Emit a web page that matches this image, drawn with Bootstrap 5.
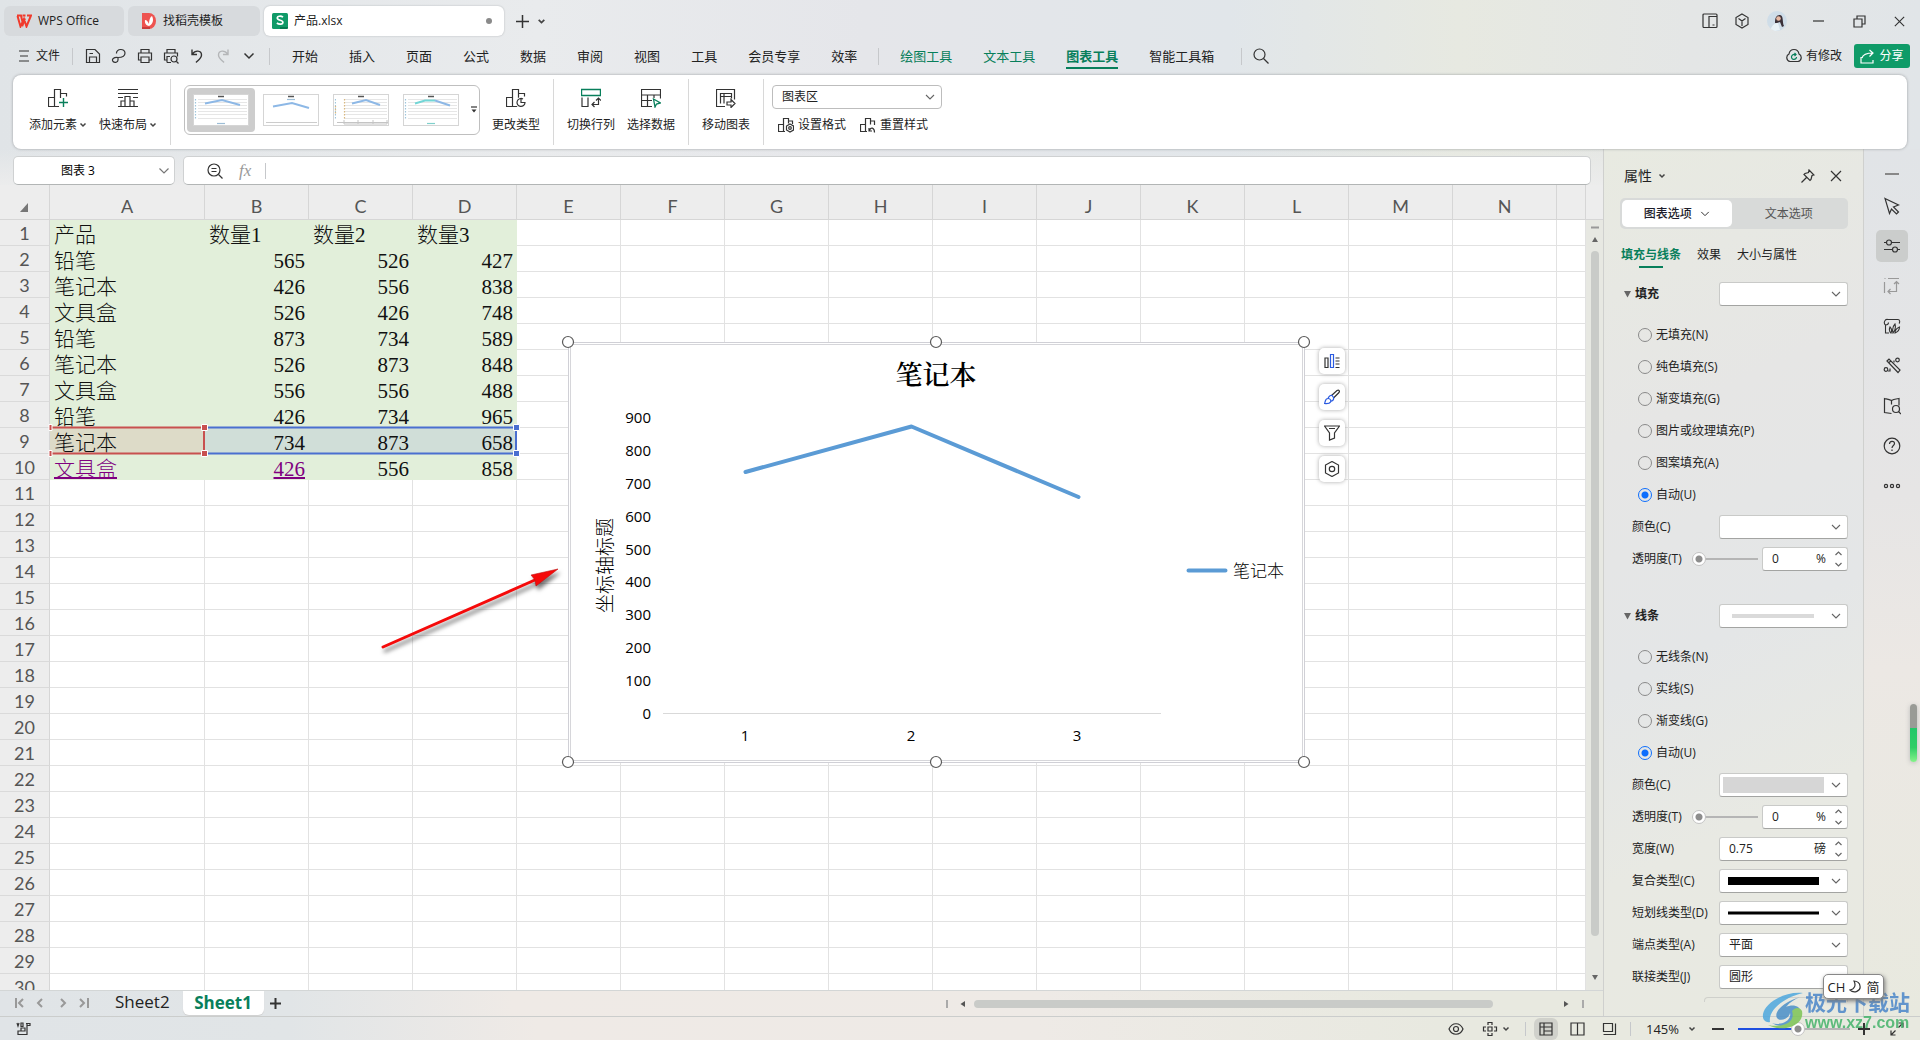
<!DOCTYPE html>
<html lang="zh-CN">
<head>
<meta charset="utf-8">
<meta name="viewport" content="width=device-width, initial-scale=1">
<title>产品.xlsx - WPS Office</title>
<link href="https://cdn.jsdelivr.net/npm/bootstrap@5.3.0/dist/css/bootstrap.min.css" rel="stylesheet">
<style>
:root{--ui:"Open Sans","Noto Sans CJK SC",sans-serif;--green:#087f5b;--line:#d2d3d3}
body{font-family:var(--ui);font-size:12px;line-height:18px;color:#222;overflow:hidden;
 background:linear-gradient(90deg,#e0e4e7 0,#e9ebed 28%,#e5e6ea 45%,#e1e6ea 64%,#e7e9e1 76%,#e4e6e6 88%,#e1e5e8 100%)}
svg{display:block;fill:none;stroke:#333;stroke-width:1.2;flex:none}
svg.plain{stroke:none}
button{background:none;border:0;padding:0;color:inherit;font-size:inherit;line-height:inherit}
a{color:inherit;text-decoration:none}
.g{stroke:var(--green)}
.titlebar{height:40px;padding:6px 14px 4px 4px}
.wintab{height:30px;border-radius:6px;background:#d7dadd;padding:0 12px;gap:6px}
.wintab.current{background:#fff;box-shadow:0 0 2px #aeb2b5}
.menurow{height:32px;font-size:13px;line-height:18px;padding:0 10px 0 19px}
.menurow nav{gap:31px}
.sepv{width:1px;background:#c6c8cb;flex:none}
.menurow .sepv{height:17px}
.menurow nav a.tool{color:var(--green)}
.menurow nav a.current{font-weight:700;position:relative}
.menurow nav a.current::after{content:"";position:absolute;left:0;right:0;bottom:-4px;height:2px;background:var(--green)}
.share{background:#0f9b68;color:#fff;border-radius:3px;height:24px;width:56px;gap:4px}
.ribbon{height:74px;margin:3px 13px 0;background:#fff;border-radius:8px;box-shadow:0 0 3px #9a9da0;position:relative;z-index:2}
.ribbon .sepv{height:66px;background:#d8d8d8;margin-top:4px}
.rgroup{gap:12px;padding:0 13px}
.rbtn{padding-top:13px;gap:8px}
.gallery{width:296px;height:50px;margin-top:10px;border:1px solid #bfbfbf;border-radius:6px;padding:2px 1px 2px 2px}
.thumb{width:68px;height:44px;border-radius:4px}
.thumb.current{background:#cdcdcd}
.thumb svg{background:#fff}
.picker{font-size:12px;line-height:18px;height:24px;padding:0 24px 0 9px;border:1px solid #c9cac8;border-bottom-color:#a3a4a2;border-radius:3px;background-color:#fff;color:#222;
 background-image:url("data:image/svg+xml,%3Csvg xmlns='http://www.w3.org/2000/svg' viewBox='0 0 10 10'%3E%3Cpath d='M1 3l4 4 4-4' fill='none' stroke='%23666' stroke-width='1.1'/%3E%3C/svg%3E");background-size:10px 10px;background-position:right 6px center}
.ribbon .picker{width:170px;border-color:#bdbdbd;border-radius:4px;margin-top:10px}
.sheetcol{min-width:0;background:linear-gradient(#e6e8ea00 0,#ededed 40px)}
.fbar{padding:7px 12px 0 13px;gap:8px}
.fbox{height:29px;background:#fff;border:1px solid #cfd1d2;border-bottom-color:#b2b5b5;border-radius:5px}
.fbox input{border:0;outline:0;background:none;min-width:0}
.gridarea{position:relative;min-height:0;overflow:hidden}
.gridview{overflow:hidden;min-width:0}
.cells{table-layout:fixed;border-collapse:separate;border-spacing:0;width:100%}
.cells th,.cells td{height:26px;padding:0;border-right:1px solid #e2e2e2;border-bottom:1px solid #e2e2e2;white-space:nowrap;overflow:hidden}
.cells td{background:#fff;font:300 21px/20px "Liberation Serif","Noto Sans CJK SC",serif;color:#111;padding:5px 3px 0 4px}
.cells th{background:#ededed;font:400 18px/24px Lato,sans-serif;color:#555;text-align:center;border-color:#d6d6d6}
.cells thead th{height:35px;padding-top:7px}
.cells tbody th{border-bottom-color:#dadada}
.cells td.used{background:#e2efda;border-color:#e2efda}
.cells td.num{text-align:right}
.cells td.series{background:#dddbc8;border-color:#dddbc8}
.cells td.value{background:#d0ded8;border-color:#d0ded8}
.cells td.linked a{color:#800080;text-decoration:underline;text-decoration-thickness:2px;text-underline-offset:1px}
.overlay{position:absolute;left:0;top:0;pointer-events:none}
.overlay text{stroke:none;fill:#000}
.axis{font:15px "Open Sans",sans-serif}
.ctools{position:absolute;left:1319px;top:163px;gap:10px}
.ctools button{width:26px;height:26px;border-radius:5px;background:#fff;box-shadow:0 0 4px #aaa}
.vscroll{width:17px;background:#e7e8e2}
.vhead{height:35px;background:#ededed;border-bottom:1px solid #d6d6d6}
.knobbar{background:#c9cbc8;border-radius:5px}
.sheetbar{height:26px;border-top:1px solid #d3d6d6;padding-left:14px;background:linear-gradient(90deg,#e0e4e7 0,#e1e5e7 18%,#efeae6 32%,#eeeae6 65%,#e8e9e0 88%)}
.sheetbar .nm{font-size:17px;line-height:22px}
.sheetbar .nm.current{background:#fff;color:var(--green);font-weight:700;width:81px;height:24px;border-radius:0 0 6px 6px;box-shadow:0 1px 1px #d0d0d0}
.statusbar{height:24px;border-top:1px solid #cbcdcc;padding:0 16px;background:linear-gradient(90deg,#e0e4e7 0,#e1e5e7 15%,#efeae6 28%,#eeeae6 54%,#e8e9e0 75%,#e8e9e0 100%)}
.panel{width:261px;border-left:1px solid #cfd0ce;border-right:1px solid #cfd0ce;padding:0 15px 0 16px;
 background:linear-gradient(155deg,#e8eae1 0,#e6e6e5 30%,#e4e6e7 55%,#e8e9e3 75%,#e8e9e0 100%)}
.phead{height:49px;font-size:14px;padding:4px 5px 0 4px}
.seg{height:31px;border-radius:5px;background:#d8dad9;padding:2px}
.seg button{border-radius:5px;color:#555}
.seg .current{background:#fff;color:#1d1d2b;font-weight:500}
.ptabs{height:52px;gap:16px;padding-left:1px}
.ptabs .current{color:var(--green);font-weight:700;position:relative}
.ptabs .current::after{content:"";position:absolute;left:18px;right:18px;bottom:-4px;height:2px;background:var(--green)}
.sec{height:26px;font-weight:700}
.sec svg{margin:0 4px}
.prow{height:32px;padding-left:12px}
.panel .picker{width:129px}
.prow .form-check-input{width:14px;height:14px;margin:0 4px 0 6px;border:1px solid #8a8a8a;background:none;box-shadow:none}
.prow .form-check-input:checked{border:1px solid #0d6efd;background:radial-gradient(circle,#0d6efd 0 3px,transparent 4px)}
.spin{height:24px;background:#fff;border:1px solid #c9cac8;border-bottom-color:#a3a4a2;border-radius:3px;padding:0 4px 0 9px}
.spin input{border:0;outline:0;padding:0;min-width:0;background:none;color:#222}
.rng{appearance:none;-webkit-appearance:none;height:14px;background:linear-gradient(#b5b5b5,#b5b5b5) center/100% 2px no-repeat}
.rng.opacityrng{width:66px;margin:0 4px 0 auto}
.rng::-webkit-slider-thumb{-webkit-appearance:none;width:14px;height:14px;border-radius:50%;border:1px solid #c4c4c4;background:radial-gradient(circle,#8d8d8d 0 3px,#fff 4px)}
.zoomrng{width:112px;background:linear-gradient(90deg,#1f4fe0 0 54%,#b5b5b5 54%) center/100% 2px no-repeat}
.swatch{position:relative}
.swatch i{position:absolute;left:9px;right:29px;top:50%;transform:translateY(-50%);pointer-events:none}
.swatch .fillbar{left:4px;right:24px;height:16px;background:#d6d6d6}
.swatch .soft{left:13px;right:34px;height:4px;background:#dadada}
.swatch .thick{height:8px;background:#000}
.swatch .thin{height:3px;background:#000}
.cut{width:144px;height:5px;border:1px solid #cfd0cb;border-bottom:0;border-radius:4px 4px 0 0}
.rail{width:56px;padding-top:17px;gap:8px;background:linear-gradient(#e1e4e7,#e6e5e5 40%,#ece8e4 60%,#e8e9df)}
.rail button{width:32px;height:32px;border-radius:5px}
.rail .current{background:#cbcdcc}
.viewbtn{width:24px;height:22px;margin:0 12px 0 8px;background:#d0d1cb}
.meter{position:absolute;right:3px;top:704px;width:7px;height:58px;border-radius:4px;background:linear-gradient(#999b96 0 42%,#22c768 42%,#2fce66 75%,#86f28a);box-shadow:0 1px 5px #bbb}
.ime{position:absolute;right:36px;top:974px;width:61px;height:25px;border-radius:5px;background:#fff;border:1px solid #888;box-shadow:1px 2px 4px #777;font-size:13px;gap:4px;z-index:4}
.brandmark{position:absolute;right:10px;bottom:8px;gap:1px;z-index:3;pointer-events:none;opacity:.85}
.brandmark b{font-size:21px;line-height:24px;color:#4a86c9;font-weight:700}
.brandmark span{font:700 16px/18px "Liberation Sans",sans-serif;color:#45b36b}
</style>
</head>
<body class="vh-100 d-flex flex-column position-relative">
<svg width="0" height="0" class="position-absolute">
 <symbol id="caret" viewBox="0 0 8 8"><path d="M1.500 2.500l2.500 2.500 2.500-2.500" stroke="#444" stroke-width="1.500"/></symbol>
 <symbol id="chev" viewBox="0 0 12 12"><path d="M1.500 3.500L6 8l4.500-4.500"/></symbol>
 <symbol id="close" viewBox="0 0 14 14"><path d="M2 2l10 10M12 2L2 12"/></symbol>
</svg>

<header class="titlebar d-flex align-items-start flex-shrink-0">
 <button class="wintab d-flex align-items-center" style="width:120px"><svg width="16" height="14" viewBox="0 0 16 14"><path d="M1 1.500h4L7 10l2-5.500M6.500 1.500h3M1.500 2l3 10.500L8 5l2.500 7.500L15 1.500h-4" stroke="#f03a2c" stroke-width="2"/></svg>WPS Office</button>
 <button class="wintab d-flex align-items-center ms-1" style="width:132px;padding-left:13px"><svg class="plain" width="16" height="16" viewBox="0 0 16 16"><path d="M1 0h7a7 8 0 0 1 0 16H1z" fill="#ee5350"/><path d="M1 14h8v2H1z" fill="#c93c3c"/><path d="M8 13C3 12 4 7 4 7c2 0 3 2 4 4 0-4 1-7 3-8 2 4 1 8-3 10z" fill="#fff"/></svg>找稻壳模板</button>
 <button class="wintab current d-flex align-items-center ms-1" style="width:240px;padding-left:8px"><svg class="plain" width="16" height="16" viewBox="0 0 16 16"><rect width="16" height="16" rx="1.500" fill="#109a68"/><path d="M8 14h8v1l-1 1H8z" fill="#067a50"/><path d="M11 4.200C9 2.600 5.300 2.900 5.300 5.100c0 2.800 5.600 1.500 5.600 4.200 0 2.300-4 2.500-6 .7" stroke="#fff" stroke-width="1.700"/></svg>产品.xlsx<span class="ms-auto rounded-circle" style="width:6px;height:6px;background:#8a8a8a"></span></button>
 <button class="align-self-center ms-2 ps-1" aria-label="新建"><svg width="13" height="13" viewBox="0 0 13 13"><path d="M6.500 0v13M0 6.500h13" stroke-width="1.500"/></svg></button>
 <button class="align-self-center ms-2" aria-label="标签列表"><svg width="9" height="9"><use href="#caret"/></svg></button>
 <div class="ms-auto align-self-center d-flex align-items-center">
  <button style="margin-right:16px" aria-label="布局"><svg width="16" height="16" viewBox="0 0 16 16"><path d="M2 1h12a1 1 0 0 1 1 1v11.500a1 1 0 0 1-1 1H2a1 1 0 0 1-1-1V2a1 1 0 0 1 1-1zM7 14.500V3.500h8M10.500 12h2"/></svg></button>
  <button style="margin-right:17px" aria-label="应用"><svg width="16" height="16" viewBox="0 0 16 16"><path d="M8 1l6 3.500v7L8 15l-6-3.500v-7zM4.500 5.500L8 8l3.500-2.500M8 8v5"/></svg></button>
  <button aria-label="账号" style="margin-right:26px"><svg class="plain" width="20" height="20" viewBox="0 0 20 20"><circle cx="10" cy="10" r="10" fill="#cfdde8"/><path d="M8 12c0-5 1-8 5-8 4 1 2 7 4 11l-2 1-2-5-3 1z" fill="#3a3038"/><circle cx="11.500" cy="7.500" r="2.300" fill="#e6b8a2"/><path d="M4 18c1-4 4-6 7-6l2 7-5 1z" fill="#e9f2f7"/></svg></button>
  <button aria-label="最小化" style="margin-right:29px"><svg width="11" height="12" viewBox="0 0 11 12"><path d="M0 6h11"/></svg></button>
  <button aria-label="还原" style="margin-right:27px"><svg width="13" height="13" viewBox="0 0 13 13"><path d="M1 4h8v8H1zM4 4V1h8v8H9"/></svg></button>
  <button aria-label="关闭"><svg width="13" height="13"><use href="#close" width="13" height="13"/></svg></button>
 </div>
</header>

<div class="menurow d-flex align-items-center flex-shrink-0">
 <button class="d-flex align-items-center" style="font-size:12px;gap:7px;margin-right:12px"><svg width="10" height="12" viewBox="0 0 10 12"><path d="M0 1h10M1 6h8M0 11h10"/></svg>文件</button>
 <span class="sepv"></span>
 <div class="d-flex" style="gap:10px;margin:0 12px">
  <button aria-label="保存"><svg width="16" height="16" viewBox="0 0 16 16"><path d="M1.500 1.500h8.500l4.500 4.500v8.500h-13zM4.500 14.500V9h7v5.500M4.500 5.500H8"/></svg></button>
  <button aria-label="输出"><svg width="16" height="16" viewBox="0 0 16 16"><path d="M5.500 5.500c-.5-5 8.500-5.500 8.500-.5 0 4-3.500 4.500-7 4.500-4.500-.5-6.500 2-5 4 2 2 5 .5 5-1.500V10"/></svg></button>
  <button aria-label="打印"><svg width="16" height="16" viewBox="0 0 16 16"><path d="M4 5V1.500h8V5M4 12H1.500V5h13v7H12M4 9h8v5.500H4z"/></svg></button>
  <button aria-label="打印预览"><svg width="16" height="16" viewBox="0 0 16 16"><path d="M4 5V1.500h8V5M4 12H1.500V5h13v3.500M4 14.500V8.500h3M4 14.500h4M13.500 13.500l2 2"/><circle cx="11" cy="11" r="3"/></svg></button>
  <button aria-label="撤销"><svg width="16" height="16" viewBox="0 0 16 16"><path d="M3 1.500v5h5M3.500 6C6 2 12.500 2 12.500 7c0 3-3 5-5.500 7.500" stroke-width="1.400"/></svg></button>
  <button aria-label="恢复"><svg width="16" height="16" viewBox="0 0 16 16" style="stroke:#b4b6b8"><path d="M13 1.500v5H8M12.500 6C10 2 3.500 2 3.500 7c0 3 3 5 5.500 7.500" stroke-width="1.400"/></svg></button>
  <button aria-label="更多"><svg width="16" height="12" viewBox="-2 0 16 12"><use href="#chev" width="12" height="12" stroke-width="1.500"/></svg></button>
 </div>
 <span class="sepv"></span>
 <nav class="d-flex align-items-center" style="margin-left:22px">
  <a href="#">开始</a><a href="#">插入</a><a href="#">页面</a><a href="#">公式</a><a href="#">数据</a><a href="#">审阅</a><a href="#">视图</a><a href="#">工具</a><a href="#">会员专享</a><a href="#">效率</a>
 </nav>
 <span class="sepv" style="margin:0 21px 0 21px"></span>
 <nav class="d-flex align-items-center"><a href="#" class="tool">绘图工具</a><a href="#" class="tool">文本工具</a><a href="#" class="tool current">图表工具</a><a href="#">智能工具箱</a></nav>
 <span class="sepv" style="margin:0 11px 0 27px"></span>
 <button aria-label="搜索"><svg width="16" height="16" viewBox="0 0 16 16"><circle cx="6.500" cy="6.500" r="5.500"/><path d="M10.500 10.500l5 5"/></svg></button>
 <div class="ms-auto d-flex align-items-center" style="font-size:12px;gap:12px">
  <button class="d-flex align-items-center gap-1"><svg width="16" height="16" viewBox="0 0 16 16"><path d="M4 13.500a4 4 0 0 1-1-7.500C4 0 12 0 13 6a4 4 0 0 1-1 7.500z"/><path class="g" d="M10.500 9A2.500 2.500 0 1 1 8.500 6.500h1.500M8.500 5l1.500 1.500L8.500 8"/></svg>有修改</button>
  <button class="share d-flex align-items-center justify-content-center"><svg width="15" height="15" viewBox="0 0 15 15" style="stroke:#fff"><path d="M1 8v6h12v-3M2 9c1-4 5-5 11-5M9.500 1L13 4 9.500 7.500"/></svg>分享</button>
 </div>
</div>

<section class="ribbon d-flex flex-shrink-0">
 <div class="rgroup d-flex ps-3">
  <button class="rbtn d-flex flex-column align-items-center"><svg width="20" height="20" viewBox="0 0 20 20"><path d="M.5 18.500v-9h6v9zM6.500 9.500v-8h6v17h-6M12.500 5.500h6v3"/><path d="M11 10h8v9h-8z" fill="#fff" stroke="none"/><path class="g" d="M15.500 10v9M11 14.500h9" stroke-width="1.400"/></svg><span class="d-flex align-items-center">添加元素<svg style="margin-left:2px" width="8" height="8"><use href="#caret"/></svg></span></button>
  <button class="rbtn d-flex flex-column align-items-center"><svg width="20" height="20" viewBox="0 0 20 20"><path d="M0 1.500h20M0 5.500h20M0 9.500h5M15 9.500h5M0 18.500h20M3 18v-5h4v5M7 13V8.500h5V18M12 13h4v5"/></svg><span class="d-flex align-items-center">快速布局<svg style="margin-left:2px" width="8" height="8"><use href="#caret"/></svg></span></button>
 </div>
 <span class="sepv"></span>
 <div class="rgroup d-flex">
  <div class="gallery d-flex align-items-center">
   <button class="thumb current d-flex align-items-center justify-content-center" aria-label="样式 1"><svg width="56" height="32" viewBox="0 0 56 32"><g id="mini"><rect x=".5" y=".5" width="55" height="31" stroke="#d5d5d5" stroke-width="1"/><path d="M5 5.500h49M5 8.500h49M5 11.500h49M5 14.500h49M5 17.500h49M5 20.500h49M5 24.500h49" stroke="#e6e6e6" stroke-width="1.200"/><path d="M2.500 5v20" stroke="#9fc6dc" stroke-dasharray="1.500 1.500"/><path d="M25 2.500h6" stroke="#555" stroke-width="1.500"/></g><path d="M12 9.500L29 6l18 5" stroke="#8db8e6" stroke-width="2"/><path d="M24 29.500h8" stroke="#9dbdd6"/></svg></button>
   <button class="thumb d-flex align-items-center justify-content-center" style="margin-left:2px" aria-label="样式 2"><svg width="56" height="32" viewBox="0 0 56 32"><rect x=".5" y=".5" width="55" height="31" stroke="#d5d5d5" stroke-width="1"/><path d="M25 2.500h6" stroke="#555" stroke-width="1.500"/><path d="M24 5.500h8" stroke="#9dbdd6"/><path d="M10 12.500L29 9l17 5" stroke="#8db8e6" stroke-width="2"/><path d="M3 28.500h51" stroke="#ccc"/></svg></button>
   <button class="thumb d-flex align-items-center justify-content-center" style="margin-left:2px" aria-label="样式 3"><svg width="56" height="32" viewBox="0 0 56 32"><use href="#mini"/><rect x="3" y="4" width="8" height="24" fill="#fff" stroke="none"/><path d="M2.500 12v8M11.500 5v20" stroke="#d9b880" stroke-dasharray="1.500 1.500"/><path d="M19 9.500L33 6l14 5" stroke="#8db8e6" stroke-width="2"/><path d="M4 28.500h51M11 26v4h43v-4M25 26v4M40 26v4" stroke="#c4c4c4" stroke-width="1"/></svg></button>
   <button class="thumb d-flex align-items-center justify-content-center" style="margin-left:2px" aria-label="样式 4"><svg width="56" height="32" viewBox="0 0 56 32"><use href="#mini"/><path d="M12 9.500L22 6.500h10" stroke="#74d6d6" stroke-width="2"/><path d="M32 6.500l15 5" stroke="#8db8e6" stroke-width="2"/><path d="M24 29.500h8" stroke="#80d0cc"/></svg></button>
   <button class="ms-auto" aria-label="更多样式"><svg width="8" height="8" viewBox="0 0 8 8"><path d="M1 1h6"/><path d="M1.500 3.500h5L4 6.500z" fill="#333" stroke="none"/></svg></button>
  </div>
  <button class="rbtn d-flex flex-column align-items-center"><svg width="20" height="20" viewBox="0 0 20 20"><path d="M.5 18.500v-9h6v9zM6.500 9.500v-8h6v17h-6M12.500 5.500h6v3"/><circle cx="15" cy="14.500" r="5.500" fill="#fff" stroke="none"/><path d="M17 11a4 4 0 1 0 2 3.500h-4v-4"/></svg>更改类型</button>
 </div>
 <span class="sepv"></span>
 <div class="rgroup d-flex">
  <button class="rbtn d-flex flex-column align-items-center"><svg width="20" height="20" viewBox="0 0 20 20"><path class="g" d="M.5 1.500h19v6H.5z" stroke-width="1.400"/><path d="M1 9.500v9h6v-9M11 16.500h6.500v-6M13.500 14L11 16.500l2.500 2.500M15 12.500l2.500-2.500 2.500 2.500"/></svg>切换行列</button>
  <button class="rbtn d-flex flex-column align-items-center"><svg width="20" height="20" viewBox="0 0 20 20"><path d="M11 18.500H.5v-17h19v9M.5 7h19M.5 12.500H11M6.500 7v11.500M13 7v3"/><path class="g" d="M12.500 11l7 4-4 1-1.500 3z" stroke-width="1.300"/></svg>选择数据</button>
 </div>
 <span class="sepv"></span>
 <div class="rgroup d-flex">
  <button class="rbtn d-flex flex-column align-items-center"><svg width="20" height="20" viewBox="0 0 20 20"><path d="M9 18.500H.5v-17h18v10M4.500 15.500v-10h11v5M4.500 8.500h11M8 5.500v10M11 14h4v-2.500l4 4-4 4V17h-4z"/></svg>移动图表</button>
 </div>
 <span class="sepv"></span>
 <div class="d-flex flex-column" style="padding-left:8px;gap:7px">
  <select class="form-select picker" aria-label="图表元素"><option>图表区</option></select>
  <div class="d-flex" style="gap:14px;padding-left:6px">
   <button class="d-flex align-items-center gap-1"><svg width="16" height="16" viewBox="0 0 16 16"><path d="M.5 14.500v-7h5v7zM5.500 7.500v-6h5v5M5.500 14.500H7M10.500 4h4v3"/><path d="M12 7l3.500 2v4L12 15l-3.500-2V9z"/><circle cx="12" cy="11" r="1.300"/></svg>设置格式</button>
   <button class="d-flex align-items-center gap-1"><svg width="16" height="16" viewBox="0 0 16 16"><path d="M.5 14.500v-7h5v7zM5.500 7.500v-6h5v6M5.500 14.500H7M10.500 4h4v4M9 11v3h3M9.500 13.500c1-4 5-3 5 2"/></svg>重置样式</button>
  </div>
 </div>
</section>

<main class="d-flex" style="flex:1 1 0;min-height:0">
 <div class="sheetcol flex-grow-1 d-flex flex-column">
  <div class="fbar d-flex flex-shrink-0">
   <div class="fbox d-flex align-items-center pe-1" style="width:162px"><input class="w-100 text-center ps-0 pe-3" value="图表 3" aria-label="名称框"><svg width="12" height="12" style="stroke:#777"><use href="#chev"/></svg></div>
   <label class="fbox d-flex align-items-center flex-grow-1" style="padding-left:23px"><svg width="16" height="16" viewBox="0 0 16 16"><circle cx="7" cy="7" r="6"/><path d="M11.500 11.500l4 4M4.500 5.500h5M4.500 8.500h5"/></svg><i class="ms-3" style="font:italic 17px/20px 'Liberation Serif',serif;color:#999">fx</i><span class="sepv" style="height:16px;margin-left:14px"></span><input class="flex-grow-1" aria-label="编辑栏"></label>
  </div>
  <div class="gridarea d-flex flex-grow-1">
   <div class="gridview flex-grow-1">
    <table class="cells"><colgroup id="cols"></colgroup><thead id="colheads"></thead><tbody id="rows"></tbody></table>
   </div>
   <div class="vscroll d-flex flex-column align-items-center flex-shrink-0">
    <div class="vhead w-100"></div>
    <svg class="mt-1" width="10" height="24" viewBox="0 0 10 24"><path d="M1 3.500h8" stroke="#999" stroke-width="2"/><path d="M2 18l3-5 3 5z" fill="#666" stroke="none"/></svg>
    <div class="knobbar flex-grow-1" style="width:8px;margin:3px 0 38px"></div>
    <svg class="mb-2" width="8" height="8" viewBox="0 0 8 8"><path d="M1 1h6L4 6z" fill="#666" stroke="none"/></svg>
   </div>
   <svg class="overlay" width="1340" height="600" viewBox="0 185 1340 600">
    <path d="M50 427.500h154M50 453.500h154M204 427v27" stroke="#c8504f" stroke-width="2"/>
    <path d="M205 427.500h311v26h-311" stroke="#4a6fd0" stroke-width="2"/>
    <path d="M49 424.500h3v6h-3zM49 450.500h3v6h-3zM201.500 424.500h6v6h-6zM201.500 450.500h6v6h-6z" fill="#c8504f" stroke="#fff" stroke-width="1"/>
    <path d="M513.500 424.500h6v6h-6zM513.500 450.500h6v6h-6z" fill="#4a6fd0" stroke="#fff" stroke-width="1"/>
    <rect x="568.5" y="342.5" width="736" height="420" fill="#fff" stroke="#d0d0d6" stroke-width="1"/>
    <rect x="570.5" y="344.500" width="732" height="416" stroke="#d6d6da" stroke-width="1"/>
    <path d="M663 713.500h498" stroke="#d9d9d9" stroke-width="1"/>
    <path d="M745.500 472L911.500 426.500l167 70.500M1188.500 570.500h37" stroke="#5b9bd5" stroke-width="4" stroke-linecap="round" stroke-linejoin="round"/>
    <text x="936" y="385" text-anchor="middle" font-size="27" font-weight="600" font-family="Noto Serif CJK SC,Noto Sans CJK SC">笔记本</text>
    <text x="1233" y="577" font-size="17" font-weight="300" font-family="Noto Sans CJK SC">笔记本</text>
    <text transform="translate(612 613) rotate(-90)" font-size="19" font-weight="300" font-family="Noto Sans CJK SC">坐标轴标题</text>
    <g class="axis" id="axis"></g>
    <g fill="#fff" stroke="#5a5a5a" stroke-width="1.200"><circle cx="568" cy="342" r="5.500"/><circle cx="936" cy="342" r="5.500"/><circle cx="1304" cy="342" r="5.500"/><circle cx="568" cy="762" r="5.500"/><circle cx="936" cy="762" r="5.500"/><circle cx="1304" cy="762" r="5.500"/></g>
    <g style="filter:drop-shadow(2px 4px 2px #0008)"><path d="M383 647l153-67.500" stroke="#f50a0a" stroke-width="3" stroke-linecap="round"/><path d="M558 569l-22 17-1-6-4-5z" fill="#f50a0a" stroke="#c01010" stroke-width=".6"/></g>
   </svg>
   <div class="ctools d-flex flex-column">
    <button class="d-flex align-items-center justify-content-center" aria-label="图表元素"><svg width="16" height="16" viewBox="0 0 16 16"><path d="M1 5h3v9.500H1zM11.500 5h4M11.500 8h4M11.500 11h4M11.500 14.500h4"/><path d="M6.500 1.500h3v13h-3z" stroke="#2b5be0"/></svg></button>
    <button class="d-flex align-items-center justify-content-center" aria-label="图表样式"><svg width="16" height="16" viewBox="0 0 16 16"><path d="M7.500 6.500L13 1.500c2-1 3 .5 2 2L9.500 9"/><path d="M.5 14.500c1-1 0-5 3.500-5 3 0 3 2.500 2.500 3.500-1 2-4 1.500-6 1.500zM4 9.500c1-3 3-3.500 4-3l1.500 2c.5 2-1 3.500-3 4" stroke="#2b5be0"/></svg></button>
    <button class="d-flex align-items-center justify-content-center" aria-label="图表筛选器"><svg width="16" height="16" viewBox="0 0 16 16"><path d="M.5 1h15l-5 7v5l-5 2V8zM5 3.500h6"/></svg></button>
    <button class="d-flex align-items-center justify-content-center" aria-label="设置图表区域格式"><svg width="16" height="16" viewBox="0 0 16 16"><path d="M8 .5L14.500 4v8L8 15.500 1.500 12V4z"/><circle cx="8" cy="8" r="2.700"/></svg></button>
   </div>
  </div>
  <div class="sheetbar d-flex align-items-start flex-shrink-0">
   <svg class="mt-1" width="76" height="16" viewBox="0 0 76 16" style="stroke:#999;stroke-width:2"><path d="M2 3v10M9 4L5 8l4 4M28 4l-4 4 4 4M47 4l4 4-4 4M66 4l4 4-4 4M74 3v10"/></svg>
   <button class="nm" style="margin:0 13px 0 25px">Sheet2</button><button class="nm current">Sheet1</button>
   <button style="margin:7px 0 0 6px" aria-label="新建工作表"><svg width="11" height="11" viewBox="0 0 11 11"><path d="M5.500 0v11M0 5.500h11" stroke-width="2"/></svg></button>
   <div class="d-flex align-items-center h-100" style="margin-left:auto;width:659px;padding-right:18px">
    <svg width="30" height="10" viewBox="0 0 30 10"><path d="M3 1v8" stroke="#aaa" stroke-width="2"/><path d="M21 2v6l-4.500-3z" fill="#555" stroke="none"/></svg>
    <div class="knobbar" style="width:519px;height:8px"></div>
    <svg class="ms-auto" width="24" height="10" viewBox="0 0 24 10"><path d="M3 2v6l4.500-3z" fill="#555" stroke="none"/><path d="M22 1v8" stroke="#aaa" stroke-width="2"/></svg>
   </div>
  </div>
 </div>

 <aside class="panel flex-shrink-0 overflow-hidden">
  <div class="phead d-flex align-items-center"><span>属性</span><svg style="margin-left:6px" width="8" height="8"><use href="#caret"/></svg>
   <button class="ms-auto" style="margin-right:14px" aria-label="固定"><svg width="14" height="14" viewBox="0 0 14 14"><path d="M8 1l5 5-2 .5-1 4-1 1L3 5.500l1-1 3.500-1zM5.500 8.500l-5 5"/></svg></button><button aria-label="关闭面板"><svg width="14" height="14"><use href="#close"/></svg></button></div>
  <div class="seg d-flex"><button class="current d-flex align-items-center justify-content-center gap-2" style="flex:110 0 0">图表选项<svg width="10" height="10"><use href="#chev"/></svg></button><button style="flex:115 0 0">文本选项</button></div>
  <div class="ptabs d-flex align-items-center"><a href="#" class="current">填充与线条</a><a href="#">效果</a><a href="#">大小与属性</a></div>

  <div class="sec d-flex align-items-center justify-content-between"><label for="fillsel"><svg class="d-inline-block" width="7" height="7" viewBox="0 0 7 7"><path d="M0 0h7L3.500 6.500z" fill="#666" stroke="none"/></svg>填充</label><select id="fillsel" class="form-select picker"><option></option></select></div>
  <div style="margin-top:12px">
   <div class="prow d-flex align-items-center"><input class="form-check-input" type="radio" name="fill" id="f1"><label for="f1">无填充(N)</label></div>
   <div class="prow d-flex align-items-center"><input class="form-check-input" type="radio" name="fill" id="f2"><label for="f2">纯色填充(S)</label></div>
   <div class="prow d-flex align-items-center"><input class="form-check-input" type="radio" name="fill" id="f3"><label for="f3">渐变填充(G)</label></div>
   <div class="prow d-flex align-items-center"><input class="form-check-input" type="radio" name="fill" id="f4"><label for="f4">图片或纹理填充(P)</label></div>
   <div class="prow d-flex align-items-center"><input class="form-check-input" type="radio" name="fill" id="f5"><label for="f5">图案填充(A)</label></div>
   <div class="prow d-flex align-items-center"><input class="form-check-input" type="radio" name="fill" id="f6" checked><label for="f6">自动(U)</label></div>
   <div class="prow d-flex align-items-center justify-content-between"><label for="fc">颜色(C)</label><select id="fc" class="form-select picker"><option></option></select></div>
   <div class="prow d-flex align-items-center justify-content-between"><label for="ft">透明度(T)</label><input type="range" class="rng opacityrng" value="0" aria-label="填充透明度"><span class="spin d-flex align-items-center" style="width:86px"><input class="flex-grow-1" id="ft" value="0"><span style="margin-right:8px">%</span><svg width="9" height="18" viewBox="0 0 9 18" style="stroke:#666"><path d="M1.500 5l3-3 3 3M1.500 13l3 3 3-3"/></svg></span></div>
  </div>

  <div class="sec d-flex align-items-center justify-content-between" style="margin-top:28px"><label for="linesel"><svg class="d-inline-block" width="7" height="7" viewBox="0 0 7 7"><path d="M0 0h7L3.500 6.500z" fill="#666" stroke="none"/></svg>线条</label><span class="swatch"><select id="linesel" class="form-select picker"><option></option></select><i class="soft"></i></span></div>
  <div style="margin-top:12px">
   <div class="prow d-flex align-items-center"><input class="form-check-input" type="radio" name="ln" id="l1"><label for="l1">无线条(N)</label></div>
   <div class="prow d-flex align-items-center"><input class="form-check-input" type="radio" name="ln" id="l2"><label for="l2">实线(S)</label></div>
   <div class="prow d-flex align-items-center"><input class="form-check-input" type="radio" name="ln" id="l3"><label for="l3">渐变线(G)</label></div>
   <div class="prow d-flex align-items-center"><input class="form-check-input" type="radio" name="ln" id="l4" checked><label for="l4">自动(U)</label></div>
   <div class="prow d-flex align-items-center justify-content-between"><label for="lc">颜色(C)</label><span class="swatch"><select id="lc" class="form-select picker"><option></option></select><i class="fillbar"></i></span></div>
   <div class="prow d-flex align-items-center justify-content-between"><label for="lt">透明度(T)</label><input type="range" class="rng opacityrng" value="0" aria-label="线条透明度"><span class="spin d-flex align-items-center" style="width:86px"><input class="flex-grow-1" id="lt" value="0"><span style="margin-right:8px">%</span><svg width="9" height="18" viewBox="0 0 9 18" style="stroke:#666"><path d="M1.500 5l3-3 3 3M1.500 13l3 3 3-3"/></svg></span></div>
   <div class="prow d-flex align-items-center justify-content-between"><label for="lw">宽度(W)</label><span class="spin d-flex align-items-center" style="width:129px"><input class="flex-grow-1" id="lw" value="0.75"><span style="margin-right:8px">磅</span><svg width="9" height="18" viewBox="0 0 9 18" style="stroke:#666"><path d="M1.500 5l3-3 3 3M1.500 13l3 3 3-3"/></svg></span></div>
   <div class="prow d-flex align-items-center justify-content-between"><label for="lk">复合类型(C)</label><span class="swatch"><select id="lk" class="form-select picker"><option></option></select><i class="thick"></i></span></div>
   <div class="prow d-flex align-items-center justify-content-between"><label for="ld">短划线类型(D)</label><span class="swatch"><select id="ld" class="form-select picker"><option></option></select><i class="thin"></i></span></div>
   <div class="prow d-flex align-items-center justify-content-between"><label for="le">端点类型(A)</label><select id="le" class="form-select picker"><option>平面</option></select></div>
   <div class="prow d-flex align-items-center justify-content-between"><label for="lj">联接类型(J)</label><select id="lj" class="form-select picker"><option>圆形</option></select></div>
   <div class="cut ms-auto mt-1"></div>
  </div>
 </aside>

 <div class="rail d-flex flex-column align-items-center flex-shrink-0">
  <svg width="14" height="16" viewBox="0 0 14 16"><path d="M0 8h14" stroke="#888" stroke-width="2"/></svg>
  <button class="d-flex align-items-center justify-content-center" aria-label="选择"><svg width="18" height="18" viewBox="0 0 18 18"><path d="M2 1.500l13.500 6.500-5 2 5 5-2 2-5-5-2 4.500z"/></svg></button>
  <button class="current d-flex align-items-center justify-content-center" aria-label="属性"><svg width="18" height="18" viewBox="0 0 18 18"><path d="M1 5.500h2.500M8.500 5.500H17M1 12.500h8.500M14.500 12.500H17"/><circle cx="6" cy="5.500" r="2.500"/><circle cx="12" cy="12.500" r="2.500"/></svg></button>
  <button class="d-flex align-items-center justify-content-center" aria-label="转换"><svg width="18" height="18" viewBox="0 0 18 18" style="stroke:#999"><path d="M1.500 1.500h1M5 1.500h11M1.500 5v11M5 14.500h8.500V5M7.500 12L5 14.500 7.500 17M11 7l2.500-2.500L16 7"/></svg></button>
  <button class="d-flex align-items-center justify-content-center" aria-label="推荐"><svg width="18" height="18" viewBox="0 0 18 18"><path d="M6 16H2.500V8C0 6 2 1.500 5 2.500h10c2 0 2 3 1 4M2.500 8c2 0 3-1 3-2.500M8 16c-2-2-2-4-1-6 2 2 2 4 1 6zM10 16c-1-4 0-7 2-9 1 4 0 7-2 9zM12 16c0-3 2-5 4.500-6 0 3-2 5-4.500 6z" stroke-width="1.100"/></svg></button>
  <button class="d-flex align-items-center justify-content-center" aria-label="美化"><svg width="18" height="18" viewBox="0 0 18 18"><path d="M4 4l2-2 11 11-2 2.500zM5.500 6L8 3.800"/><circle cx="14.500" cy="3" r="1.800"/><circle cx="3" cy="12.500" r="1.800"/><path d="M11 3.500v2M7 11.500v2.500H5"/></svg></button>
  <button class="d-flex align-items-center justify-content-center" aria-label="查阅"><svg width="18" height="18" viewBox="0 0 18 18"><path d="M8.500 3.500C6 2 4 2 1.500 1.500v14l7 1M8.500 3.500c2-1.500 4-1.500 7.500-2v7M8.500 3.500v4M15.500 14.500l2.500 2.500"/><circle cx="13" cy="12" r="3.500"/></svg></button>
  <button class="d-flex align-items-center justify-content-center" aria-label="帮助"><svg width="18" height="18" viewBox="0 0 18 18"><circle cx="9" cy="9" r="7.800"/><path d="M6.500 7c0-3.500 5-3.500 5-.5 0 2-2.500 2-2.500 4.500M9 12.500v1.500"/></svg></button>
  <button class="d-flex align-items-center justify-content-center" aria-label="更多"><svg width="18" height="6" viewBox="0 0 18 6"><circle cx="3" cy="3" r="1.600"/><circle cx="9" cy="3" r="1.600"/><circle cx="15" cy="3" r="1.600"/></svg></button>
 </div>
</main>

<footer class="statusbar d-flex align-items-center flex-shrink-0">
 <svg width="16" height="14" viewBox="0 0 16 14"><path d="M1 1l1 3 1-3M5 1v3.500h2V1zM10 1.500h4v2h-3M11 1v11.500H2V9h7V6H5v3"/></svg>
 <svg class="ms-auto" width="16" height="14" viewBox="0 0 16 14"><path d="M1 7c3-7 11-7 14 0-3 7-11 7-14 0z"/><circle cx="8" cy="7" r="2.500"/></svg>
 <svg style="margin-left:18px" width="16" height="16" viewBox="0 0 16 16"><path d="M6 6h4v4H6zM6 4V1.500h4V4M6 12v2.500h4V12M4 6H1.500v4H4M12 6h2.500v4H12"/></svg>
 <svg style="margin:0 15px 0 4px" width="8" height="8"><use href="#caret"/></svg>
 <span class="sepv" style="height:14px"></span>
 <button class="viewbtn rounded d-flex align-items-center justify-content-center" aria-label="普通视图"><svg width="14" height="14" viewBox="0 0 14 14"><path d="M1 1h12v12H1zM1 5h12M5 1v12M5 9h8"/></svg></button>
 <svg width="16" height="14" viewBox="0 0 16 14"><path d="M1 1h13v12H1zM7.500 1v12"/></svg>
 <svg style="margin:0 12px 0 16px" width="16" height="14" viewBox="0 0 16 14"><path d="M1.500 1.500h9v8h-9zM10.500 12.500h3v-11M1.500 12.500h12"/></svg>
 <span class="sepv" style="height:14px"></span>
 <span style="margin-left:15px;font-size:13px">145%</span><svg style="margin:0 16px 0 9px" width="8" height="8"><use href="#caret"/></svg>
 <button aria-label="缩小"><svg width="12" height="12" viewBox="0 0 12 12"><path d="M0 6h12" stroke-width="2"/></svg></button>
 <input type="range" class="rng zoomrng" style="margin:0 8px 0 14px" value="54" aria-label="缩放">
 <button aria-label="放大"><svg width="12" height="12" viewBox="0 0 12 12"><path d="M0 6h12M6 0v12" stroke-width="2"/></svg></button>
 <svg style="margin-left:20px" width="14" height="14" viewBox="0 0 14 14"><path d="M8.500 1H13v4.500M13 1L8.500 5.500M5.500 13H1V8.500M1 13l4.500-4.500"/></svg>
</footer>

<div class="meter"></div>
<div class="ime d-flex align-items-center justify-content-center">CH<svg width="13" height="13" viewBox="0 0 13 13"><path d="M5 1c2 4 1 8-4 9 4 4 11 1 10-4C11 3 8 1 5 1z"/></svg>简</div>
<div class="brandmark d-flex align-items-center">
 <svg class="plain" width="42" height="40" viewBox="0 0 42 40"><path d="M41 2C22 0 3 12 1 23c-1 6 3 9 7 8C6 20 20 7 41 2z" fill="#4ea8de"/><path d="M38 6C24 10 11 20 15 27c3 4 12 1 13-5 2 8-10 13-18 10 9 6 24 3 28-6 4-10-6-14-14-10 4-5 9-8 14-10z" fill="#4a8fc8"/><path d="M40 20c3 15-20 22-34 14 14 3 28-2 24-14 3-4 8-4 10 0z" fill="#7cc455"/></svg>
 <div class="d-flex flex-column"><b>极光下载站</b><span>www.xz7.com</span></div>
</div>

<script>
const data=[["产品","数量1","数量2","数量3"],["铅笔",565,526,427],["笔记本",426,556,838],["文具盒",526,426,748],["铅笔",873,734,589],["笔记本",526,873,848],["文具盒",556,556,488],["铅笔",426,734,965],["笔记本",734,873,658],["文具盒",426,556,858]];
const letters=[..."ABCDEFGHIJKLMN"];
document.getElementById("cols").innerHTML=[50,155,...Array(13).fill(104)].map(w=>`<col style="width:${w}px">`).join("")+"<col>";
document.getElementById("colheads").innerHTML=`<tr><th><svg class="ms-3 mt-1" width="18" height="9" viewBox="0 0 18 9"><path d="M12 0v9H4z" fill="#777" stroke="none"/></svg></th>${letters.map(l=>`<th>${l}</th>`).join("")}<th></th></tr>`;
let html="";
for(let r=0;r<30;r++){
 html+=`<tr><th>${r+1}</th>`;
 for(let c=0;c<15;c++){
  const v=data[r]&&c<4?data[r][c]:null;
  if(v===null){html+="<td></td>";continue}
  const k=["used"];
  if(typeof v==="number")k.push("num");
  if(r===8)k.push(c?"value":"series");
  const link=r===9&&c<2;
  if(link)k.push("linked");
  html+=`<td class="${k.join(" ")}">${link?`<a href="#">${v}</a>`:v}</td>`;
 }
 html+="</tr>";
}
document.getElementById("rows").innerHTML=html;
let ax="";
for(let i=0;i<=9;i++)ax+=`<text x="651" y="${Math.round(719-i*32.9)}" text-anchor="end">${i*100}</text>`;
[745,911,1077].forEach((x,i)=>ax+=`<text x="${x}" y="741" text-anchor="middle">${i+1}</text>`);
document.getElementById("axis").innerHTML=ax;
</script>
<script src="https://cdn.jsdelivr.net/npm/bootstrap@5.3.0/dist/js/bootstrap.bundle.min.js"></script>
</body>
</html>
